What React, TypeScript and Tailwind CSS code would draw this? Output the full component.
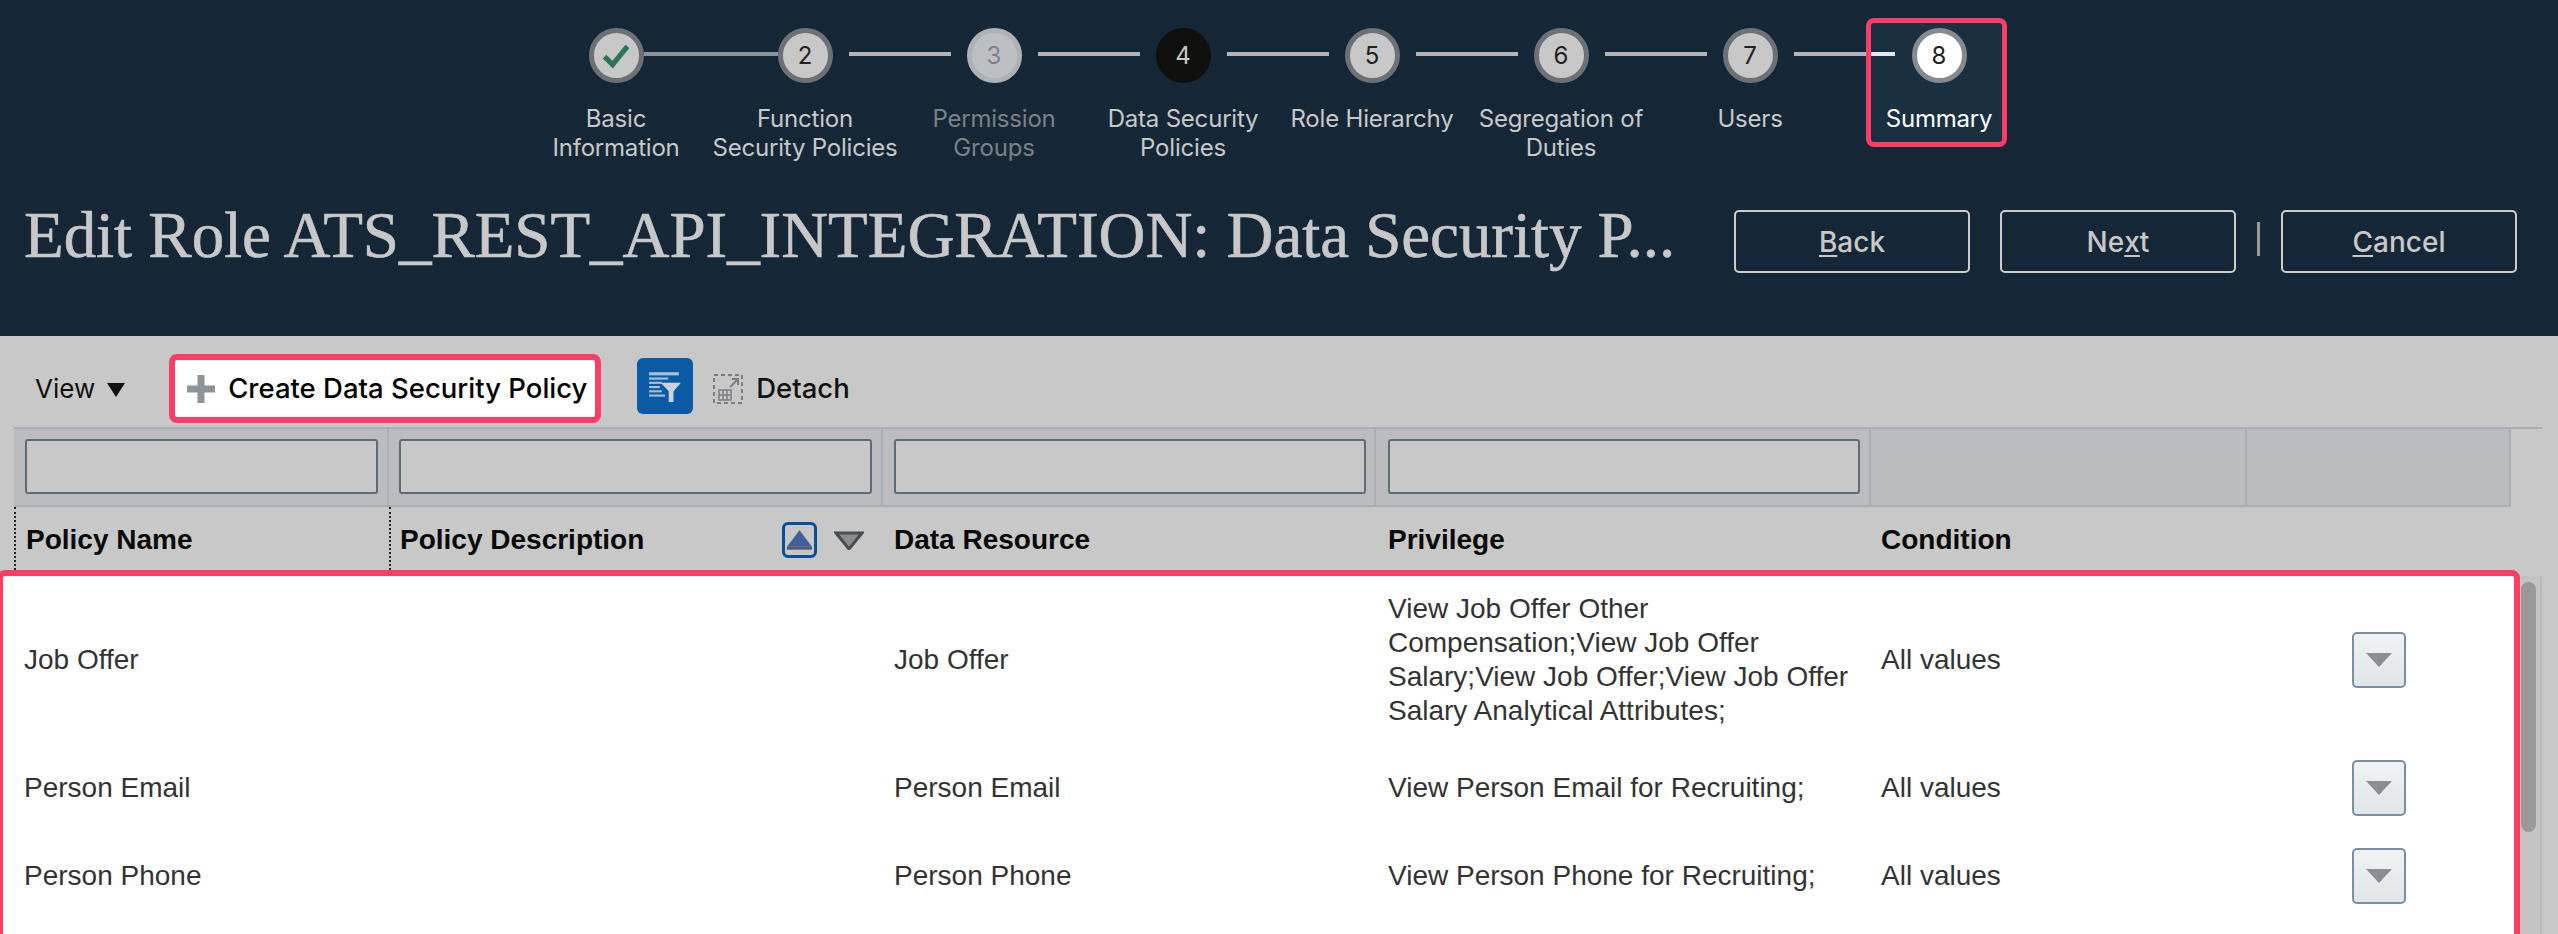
const sans = "font-['Inter',sans-serif]";

const steps = [
  { key: '1', lines: ['Basic', 'Information'] },
  { key: '2', lines: ['Function', 'Security Policies'] },
  { key: '3', lines: ['Permission', 'Groups'] },
  { key: '4', lines: ['Data Security', 'Policies'] },
  { key: '5', lines: ['Role Hierarchy'] },
  { key: '6', lines: ['Segregation of', 'Duties'] },
  { key: '7', lines: ['Users'] },
  { key: '8', lines: ['Summary'] },
];

const rows = [
  {
    name: 'Job Offer',
    resource: 'Job Offer',
    privilege: ['View Job Offer Other', 'Compensation;View Job Offer', 'Salary;View Job Offer;View Job Offer', 'Salary Analytical Attributes;'],
  },
  { name: 'Person Email', resource: 'Person Email', privilege: ['View Person Email for Recruiting;'] },
  { name: 'Person Phone', resource: 'Person Phone', privilege: ['View Person Phone for Recruiting;'] },
];

const gridCols = 'grid grid-cols-[375px_494px_493px_495px_376px_264px]';

function StepCircle({ index, label }: { index: number; label: string }) {
  if (index === 0) {
    return (
      <div className="flex h-[55px] w-[55px] shrink-0 items-center justify-center rounded-full border-[5px] border-[#6d7175] bg-[#c8c8c8]">
        <svg viewBox="0 0 28 28" className="h-[32px] w-[32px]" fill="none" stroke="#2e7558" strokeWidth="4.5">
          <path d="M4 14.5 L11 21.5 L24 5.5" />
        </svg>
      </div>
    );
  }
  const look =
    index === 2
      ? 'border-[#aeb1b5] bg-[#bdbfc2] text-[#7f8387]'
      : index === 3
        ? 'border-[#0f0f0e] bg-[#0f0f0e] text-[#c8c8c8]'
        : index === 7
          ? 'border-[#858a8e] bg-white text-[#222222]'
          : 'border-[#6d7175] bg-[#c8c8c8] text-[#222222]';
  return (
    <div className={`flex h-[55px] w-[55px] shrink-0 items-center justify-center rounded-full border-[5px] text-[24px] ${look}`}>
      {label}
    </div>
  );
}

function Stepper() {
  return (
    <div className="flex justify-center pr-[3px] pt-[28px]">
      <div className="flex">
        {steps.map((step, i) => {
          const textColor = i === 2 ? 'text-[#7a8086]' : i === 7 ? 'text-white' : 'text-[#c8c8c8]';
          return (
            <div key={step.key} className="relative flex h-[135px] w-[189px] flex-col items-center">
              {i === 7 && (
                <div className="absolute left-[21px] top-[-10px] h-[129px] w-[141px] rounded-[8px] border-[5px] border-[#fc3d66] bg-[#1a2f40]" />
              )}
              <div className="relative z-10 flex w-full">
                <div className="flex-1 pt-[24px]">
                  {i === 1 && <div className="h-[4px] bg-[#8a949c]" />}
                  {i > 1 && i < 7 && <div className="mr-[16px] h-[4px] bg-[#b3b5b8]" />}
                  {i === 7 && (
                    <div className="flex">
                      <div className="h-[4px] w-[21px] bg-[#b3b5b8]" />
                      <div className="ml-[5px] h-[4px] w-[24px] bg-[#e3e6ea]" />
                    </div>
                  )}
                </div>
                <StepCircle index={i} label={step.key} />
                <div className="flex-1 pt-[24px]">
                  {i === 0 && <div className="h-[4px] bg-[#8a949c]" />}
                  {i > 0 && i < 7 && <div className="ml-[16px] h-[4px] bg-[#b3b5b8]" />}
                </div>
              </div>
              <div className={`relative z-10 mt-[21px] whitespace-nowrap text-center text-[24px] tracking-[-0.2px] leading-[29px] ${textColor}`}>
                {step.lines.map((line) => (
                  <div key={line}>{line}</div>
                ))}
              </div>
            </div>
          );
        })}
      </div>
    </div>
  );
}

function HeaderButton({ before, mnemonic, after }: { before: string; mnemonic: string; after: string }) {
  return (
    <button className="flex h-[63px] w-[236px] shrink-0 items-center justify-center rounded-[5px] border-2 border-[#cccccc] text-[28px] font-medium text-[#c8c8c8]">
      {before}
      <span className="underline underline-offset-[3px]">{mnemonic}</span>
      {after}
    </button>
  );
}

function Toolbar() {
  return (
    <div className="flex h-[91px] items-start pl-[35px] pt-[18px]">
      <div className="flex h-[69px] items-center text-[26px] text-[#111111]">
        View
        <svg viewBox="0 0 18 14" className="ml-[12px] mt-[2px] h-[14px] w-[18px]" fill="#111111">
          <path d="M0 0 H18 L9 14 Z" />
        </svg>
      </div>
      <div className="ml-[44px] flex h-[69px] w-[432px] items-center rounded-[8px] border-[6px] border-[#fc3d66] bg-white pl-[12px] text-[27.5px] font-medium text-black">
        <svg viewBox="0 0 28 28" className="h-[28px] w-[28px]" fill="#8c9499">
          <path d="M10.5 0 H17.5 V10.5 H28 V17.5 H17.5 V28 H10.5 V17.5 H0 V10.5 H10.5 Z" />
        </svg>
        <span className="ml-[13px] whitespace-nowrap">Create Data Security Policy</span>
      </div>
      <div className="ml-[36px] mt-[4px] flex h-[56px] w-[56px] items-center justify-center rounded-[6px] bg-[#0b5aa6]">
        <svg viewBox="0 0 32 32" className="h-[34px] w-[34px]">
          <g fill="#a9bfd8">
            <rect x="1" y="3" width="28" height="3" />
            <rect x="1" y="8" width="18" height="2" />
            <rect x="1" y="12" width="12" height="2" />
            <rect x="1" y="16" width="10" height="2" />
            <rect x="1" y="20" width="12" height="2" />
            <rect x="1" y="24" width="15" height="2" />
          </g>
          <path d="M12 13 H31 L24 21 V31 H19.5 V21 Z" fill="#c9d3de" />
        </svg>
      </div>
      <div className="ml-[20px] flex h-[69px] items-center">
        <svg viewBox="0 0 30 30" className="h-[30px] w-[30px]" fill="none" stroke="#7d7f82" strokeWidth="2">
          <rect x="1" y="1" width="28" height="28" strokeDasharray="4 3" />
          <path d="M17 13 L25 5 M19 5 H25 V11" />
          <path d="M6 16 H18 V26 H6 Z M6 21 H18 M10 16 V26 M14 16 V26" strokeWidth="1.5" />
        </svg>
        <span className="ml-[13px] text-[27.5px] font-medium text-[#111111]">Detach</span>
      </div>
    </div>
  );
}

function FilterRow() {
  const cell = 'h-[76px] border-r-2 border-[#a9afb5] bg-[#babcc0]';
  const inputs = ['pl-[11px] pr-[9px]', 'pl-[10px] pr-[9px]', 'pl-[11px] pr-[8px]', 'pl-[12px] pr-[9px]'];
  return (
    <div className="ml-[14px] w-[2528px] border-t-2 border-[#a9afb5]">
      <div className={`${gridCols} border-b-2 border-[#a9afb5] w-[2497px]`}>
        {inputs.map((pad) => (
          <div key={pad} className={`${cell} ${pad} py-[10px]`}>
            <div className="h-[55px] rounded-[3px] border-2 border-[#5f6c75] bg-[#c8c8c8]" />
          </div>
        ))}
        <div className={cell} />
        <div className={cell} />
      </div>
    </div>
  );
}

function HeaderRow() {
  return (
    <div className={`${gridCols} ml-[14px] h-[63px] w-[2497px] items-center font-['Liberation_Sans',sans-serif] text-[28px] font-bold text-[#0a0a0a]`}>
      <div className="flex h-full items-center border-l-2 border-dotted border-[#222222] pl-[10px] pt-[2px]">Policy Name</div>
      <div className="flex h-full items-center justify-between border-l-2 border-dotted border-[#222222] pl-[9px] pr-[19px] pt-[2px]">
        <span>Policy Description</span>
        <span className="flex items-center gap-[17px]">
          <span className="flex h-[36px] w-[35px] items-center justify-center rounded-[6px] border-[3px] border-[#0b4f9c]">
            <svg viewBox="0 0 28 22" className="h-[22px] w-[27px]">
              <path d="M14 1 L27 18 H1 Z" fill="#3f5f9e" />
              <rect x="1" y="18" width="26" height="3" fill="#55585c" />
            </svg>
          </span>
          <svg viewBox="0 0 30 20" className="h-[20px] w-[30px]">
            <path d="M2 3 H28 L15 19 Z" fill="#8a8d90" stroke="#4a4d50" strokeWidth="3" />
          </svg>
        </span>
      </div>
      <div className="pl-[11px] pt-[2px]">Data Resource</div>
      <div className="pl-[12px] pt-[2px]">Privilege</div>
      <div className="pl-[10px] pt-[2px]">Condition</div>
      <div />
    </div>
  );
}

function RowMenuButton() {
  return (
    <button className="flex h-[56px] w-[54px] items-center justify-center rounded-[5px] border-2 border-[#7890a6] bg-gradient-to-b from-[#f1f2f3] to-[#e1e5e8]">
      <svg viewBox="0 0 26 14" className="h-[14px] w-[26px]" fill="#8b8f93">
        <path d="M0 0 H26 L13 14 Z" />
      </svg>
    </button>
  );
}

function TableBody() {
  return (
    <div className="flex">
      <div className="ml-[-3px] h-[380px] w-[2523px] shrink-0 rounded-[8px] border-[6px] border-[#fc3d66] bg-white pl-[11px] font-['Liberation_Sans',sans-serif] text-[28px] leading-[34px] text-[#333333]">
        {rows.map((row) => (
          <div key={row.name} className={`${gridCols} items-center py-[16px]`}>
            <div className="pl-[10px]">{row.name}</div>
            <div />
            <div className="pl-[11px]">{row.resource}</div>
            <div className="whitespace-nowrap pl-[12px]">
              {row.privilege.map((line) => (
                <div key={line}>{line}</div>
              ))}
            </div>
            <div className="pl-[10px]">All values</div>
            <div className="flex justify-center">
              <RowMenuButton />
            </div>
          </div>
        ))}
      </div>
      <div className="mt-[6px] h-[374px] w-[22px] border-r-2 border-[#b8b8b8] bg-[#c4c4c4] pl-[1px] pt-[6px]">
        <div className="h-[250px] w-[15px] rounded-full bg-[#999999]" />
      </div>
    </div>
  );
}

export default function App() {
  return (
    <div className={`h-[934px] w-[2558px] overflow-hidden bg-[#c8c8c8] ${sans}`}>
      <header className="h-[336px] bg-[#152736]">
        <Stepper />
        <div className="flex items-start pl-[24px] pr-[41px] pt-[47px]">
          <h1 className="mt-[-6px] w-[1710px] shrink-0 whitespace-nowrap font-['Liberation_Serif',serif] text-[65px] leading-[63px] tracking-[-0.05px] text-[#c8c8c8] [-webkit-text-stroke:0.6px_#c8c8c8]">
            Edit Role ATS_REST_API_INTEGRATION: Data Security P...
          </h1>
          <HeaderButton before="" mnemonic="B" after="ack" />
          <div className="ml-[30px]">
            <HeaderButton before="Ne" mnemonic="x" after="t" />
          </div>
          <div className="ml-[21px] mr-[21px] mt-[12px] h-[34px] w-[3px] bg-[#9a9a90]" />
          <HeaderButton before="" mnemonic="C" after="ancel" />
        </div>
      </header>
      <Toolbar />
      <FilterRow />
      <HeaderRow />
      <TableBody />
    </div>
  );
}
